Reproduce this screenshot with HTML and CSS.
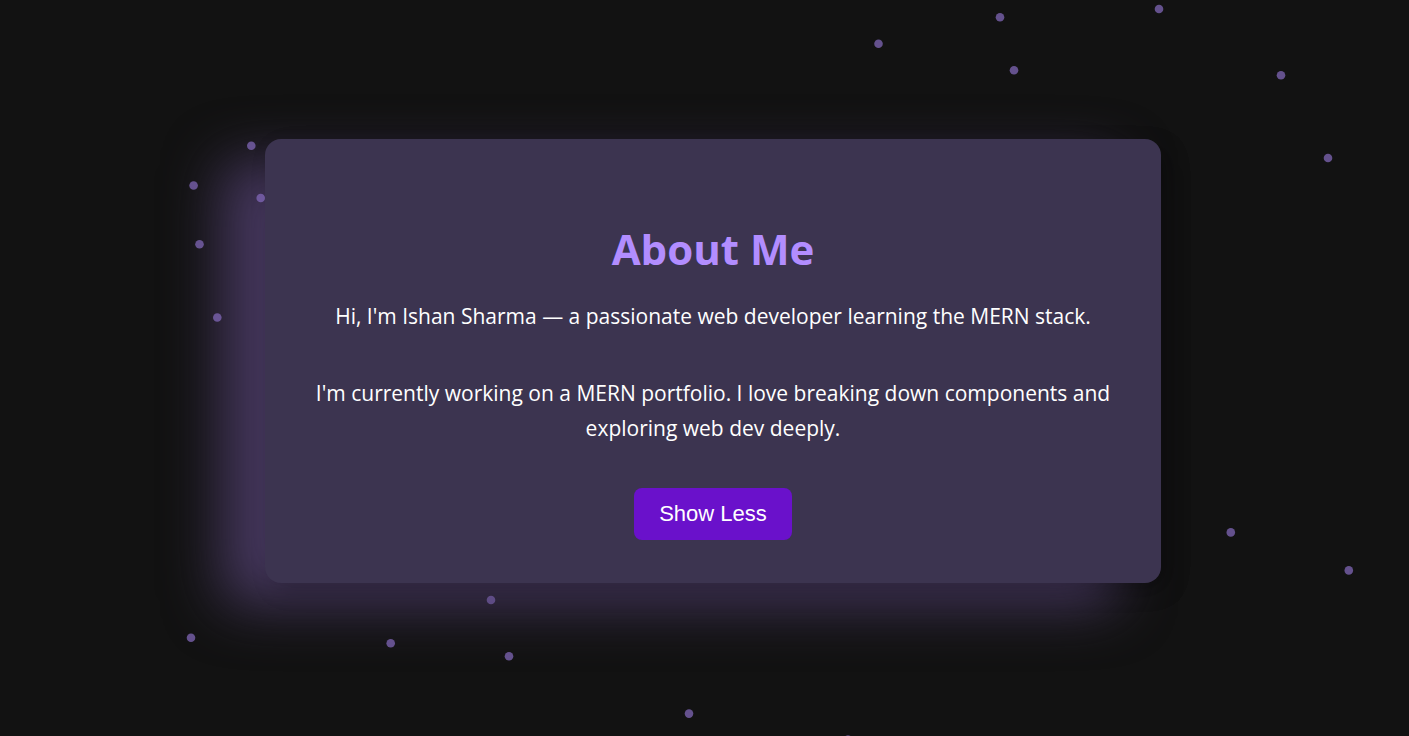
FILE: index.html
```html
<!DOCTYPE html>
<html lang="en">
<head>
<meta charset="utf-8">
<meta name="viewport" content="width=device-width, initial-scale=1">
<title>About Me</title>
<link rel="stylesheet" href="styles.css">
</head>
<body>
<svg class="particles" aria-hidden="true">
<circle cx="1000" cy="17.3" r="4.3"/><circle cx="1159" cy="9" r="4.3"/><circle cx="878.5" cy="43.7" r="4.3"/><circle cx="1014" cy="70.3" r="4.3"/><circle cx="1281" cy="75.3" r="4.3"/><circle cx="1328" cy="158" r="4.3"/><circle cx="251.3" cy="145.7" r="4.3"/><circle cx="193.6" cy="185.5" r="4.3"/><circle cx="260.7" cy="198" r="4.3"/><circle cx="199.5" cy="244.3" r="4.3"/><circle cx="217.3" cy="317.5" r="4.3"/><circle cx="491" cy="600" r="4.3" opacity="0.8"/><circle cx="191" cy="637.7" r="4.3"/><circle cx="390.7" cy="643.3" r="4.3"/><circle cx="509" cy="656.3" r="4.3"/><circle cx="689" cy="713.6" r="4.3"/><circle cx="848" cy="739.5" r="4.3"/><circle cx="1230.8" cy="532.4" r="4.3"/><circle cx="1348.8" cy="570.4" r="4.3"/>
</svg>
<main class="about">
<section class="card">
<h1 class="title">About Me</h1>
<p class="intro">Hi, I'm Ishan Sharma — a passionate web developer learning the MERN stack.</p>
<p class="details">I'm currently working on a MERN portfolio. I love breaking down components and exploring web dev deeply.</p>
<button class="toggle" type="button">Show Less</button>
</section>
</main>
</body>
</html>
```
FILE: styles.css
```css
* {
  box-sizing: border-box;
}

body {
  margin: 0;
  background: #121212;
  color: #fff;
  font-family: "Segoe UI", "Open Sans", "Noto Sans", sans-serif;
  overflow: hidden;
}

.particles {
  position: absolute;
  inset: 0;
  z-index: 1;
  width: 100%;
  height: 100%;
  fill: #8469bd;
  fill-opacity: 0.72;
  pointer-events: none;
}

.about {
  display: flex;
  align-items: center;
  justify-content: center;
  min-height: 100vh;
  padding: 0 0 14px 17px;
}

.card {
  width: 100%;
  max-width: 896px;
  padding: 80px 44px 43px;
  border-radius: 16px;
  background: #3c3450;
  box-shadow: 8px 8px 22px rgba(0, 0, 0, 0.2), -44px 22px 55px #45375d, 8px 8px 22px rgba(0, 0, 0, 0.2);
  text-align: center;
}

.title {
  margin: 0 0 20px;
  color: #b28dff;
  font-size: 42px;
  line-height: 60px;
}

.intro,
.details {
  margin: 0 0 42px;
  font-size: 21px;
  line-height: 35px;
}

.toggle {
  height: 52px;
  padding: 0 25px;
  border: 0;
  border-radius: 8px;
  background: #6a11cb;
  color: #fff;
  font-family: "Liberation Sans", Arial, sans-serif;
  font-size: 22px;
  cursor: pointer;
}
```
